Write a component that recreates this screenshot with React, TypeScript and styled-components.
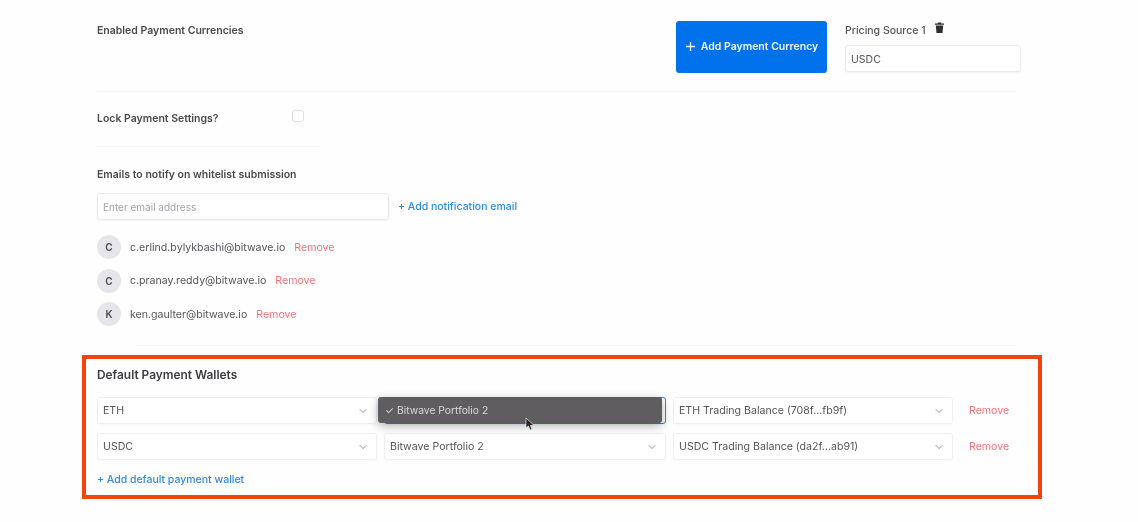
import React from "react";
import styled, { createGlobalStyle } from "styled-components";
import { ChevronDown } from "lucide-react";

const Global = createGlobalStyle`
  html, body { margin: 0; padding: 0; background: #fefefe; }
  body { font-family: Inter, "Liberation Sans", sans-serif; width: 1138px; height: 522px; overflow: hidden; }
`;

const Page = styled.div`
  box-sizing: border-box;
  width: 1138px;
  height: 522px;
  padding: 21px 0 0 97px;
  filter: blur(0.6px);
  display: flex;
  flex-direction: column;
  align-items: flex-start;
  color: #44444a;
`;

const Label = styled.div`
  font-size: 10.5px;
  font-weight: 600;
  line-height: 14px;
  color: #4a4a50;
`;

const CurrencyRow = styled.div`
  display: flex;
  width: 925px;
  height: 52px;
`;

const CurrencyLabel = styled(Label)`
  width: 579px;
  padding-top: 3px;
`;

const AddCurrency = styled.button`
  box-sizing: border-box;
  width: 151px;
  height: 52px;
  margin-right: 18px;
  border: 0;
  border-radius: 3px;
  background: #0272ec;
  color: #eef6ff;
  font: 600 10.5px Inter, sans-serif;
  display: flex;
  align-items: center;
  justify-content: center;
  gap: 5px;
  padding: 0 0 1px;
  white-space: nowrap;
`;

const Pricing = styled.div`
  display: flex;
  flex-direction: column;
  width: 176px;
`;

const PricingHead = styled.div`
  display: flex;
  align-items: flex-start;
  gap: 9px;
  height: 24px;
  padding-top: 3px;
  box-sizing: border-box;
  font-size: 10.5px;
  font-weight: 500;
  line-height: 14px;
  color: #55555b;
`;

const TrashIcon = styled.svg`
  margin-top: -2px;
`;

const PricingInput = styled.div`
  box-sizing: border-box;
  height: 27px;
  width: 176px;
  border: 1px solid #ebebee;
  border-radius: 3px;
  padding: 0 5px;
  font-size: 10.5px;
  line-height: 27px;
  color: #55555b;
  background: #fff;
  box-shadow: 0 1px 2px rgba(0, 0, 0, 0.04);
`;

const Divider = styled.div<{ $w: number; $top: number; $left?: number }>`
  width: ${(p) => p.$w}px;
  height: 1px;
  margin-top: ${(p) => p.$top}px;
  margin-left: ${(p) => p.$left ?? 0}px;
  background: #f5f5f7;
`;

const LockRow = styled.div`
  display: flex;
  align-items: flex-start;
  height: 54px;
  padding-top: 19px;
  box-sizing: border-box;
`;

const LockLabel = styled(Label)`
  width: 195px;
  padding-top: 1px;
`;

const Check = styled.span`
  box-sizing: border-box;
  width: 12px;
  height: 12px;
  margin-top: -1px;
  border: 1px solid #dfdfe3;
  border-radius: 3px;
  background: #fff;
`;

const EmailsTitle = styled(Label)`
  margin-top: 21px;
`;

const EmailRow = styled.div`
  display: flex;
  align-items: center;
  gap: 9px;
  margin-top: 11px;
`;

const EmailInput = styled.div`
  box-sizing: border-box;
  width: 292px;
  height: 27px;
  border: 1px solid #e9e9ed;
  border-radius: 3px;
  padding: 0 5px;
  font-size: 10px;
  line-height: 27px;
  color: #a3a3a9;
  background: #fff;
  box-shadow: 0 1px 2px rgba(0, 0, 0, 0.05);
`;

const BlueLink = styled.span`
  font-size: 10.5px;
  font-weight: 500;
  line-height: 14px;
  color: #2f8be6;
  white-space: nowrap;
`;

const People = styled.div`
  display: flex;
  flex-direction: column;
  gap: 9.5px;
  margin-top: 15px;
`;

const Person = styled.div`
  display: flex;
  align-items: center;
  height: 24px;
  font-size: 10.6px;
  color: #55555b;
`;

const Avatar = styled.span`
  width: 24px;
  height: 24px;
  margin-right: 9px;
  border-radius: 50%;
  background: #e6e6ea;
  color: #4b4b52;
  font-size: 10px;
  font-weight: 600;
  display: flex;
  align-items: center;
  justify-content: center;
`;

const RemoveLink = styled.span`
  margin-left: 9px;
  font-size: 10.6px;
  color: #f3737b;
`;

const Frame = styled.section`
  box-sizing: border-box;
  width: 960px;
  height: 144px;
  margin: 9px 0 0 -15px;
  border: 4px solid #f2440c;
  padding: 9px 11px 0;
`;

const FrameTitle = styled.div`
  font-size: 11.9px;
  font-weight: 600;
  line-height: 14px;
  color: #3c3c42;
`;

const WalletGrid = styled.div`
  display: grid;
  grid-template-columns: 280px 282px 280px 60px;
  column-gap: 7px;
  row-gap: 9px;
  margin-top: 15px;
  margin-right: -20px;
`;

const SelectBox = styled.div<{ $focus?: boolean }>`
  position: relative;
  box-sizing: border-box;
  height: 27px;
  border: 1px solid ${(p) => (p.$focus ? "#3f7fd0" : "#efeff2")};
  border-radius: 3px;
  background: #fff;
  padding: 0 5px;
  display: flex;
  align-items: center;
  justify-content: space-between;
  font-size: 10.6px;
  color: #55555b;
  white-space: nowrap;
  box-shadow: 0 1px 2px rgba(0, 0, 0, 0.03);
  & > svg { color: #77777d; margin-right: 2px; }
`;

const Menu = styled.div`
  position: absolute;
  left: -7px;
  top: -1px;
  width: 284px;
  height: 26px;
  box-sizing: border-box;
  border-radius: 3px;
  background: #5f5d60;
  color: #d8d8da;
  font-size: 10.3px;
  line-height: 26px;
  padding-left: 7px;
  box-shadow: 0 3px 10px rgba(0, 0, 0, 0.3);
  z-index: 2;
`;

const Cursor = styled.svg`
  position: absolute;
  left: 140px;
  top: 19px;
  z-index: 3;
`;

const RowRemove = styled.span`
  font-size: 10.6px;
  color: #f3737b;
  line-height: 27px;
  padding-left: 9px;
`;

const AddWallet = styled(BlueLink)`
  display: block;
  margin-top: 13px;
`;

const Plus = () => (
  <svg width="11" height="11" viewBox="0 0 11 11" aria-hidden="true">
    <path d="M5.5 1v9M1 5.5h9" stroke="#eef6ff" strokeWidth="1.3" />
  </svg>
);

const Trash = () => (
  <TrashIcon width="9" height="11" viewBox="0 0 9 11" aria-hidden="true">
    <path d="M3 0.5h3l.5 1H9v1.2H0V1.500h2.500zM.8 3.500h7.400L7.500 11h-6z" fill="#2f2f33" />
  </TrashIcon>
);

const Chevron = () => <ChevronDown size={12} strokeWidth={1.6} />;

const emails: [string, string][] = [
  ["C", "c.erlind.bylykbashi@bitwave.io"],
  ["C", "c.pranay.reddy@bitwave.io"],
  ["K", "ken.gaulter@bitwave.io"],
];

export default function App() {
  return (
    <>
      <Global />
      <Page>
        <CurrencyRow>
          <CurrencyLabel>Enabled Payment Currencies</CurrencyLabel>
          <AddCurrency>
            <Plus />
            Add Payment Currency
          </AddCurrency>
          <Pricing>
            <PricingHead>
              Pricing Source 1
              <Trash />
            </PricingHead>
            <PricingInput>USDC</PricingInput>
          </Pricing>
        </CurrencyRow>
        <Divider $w={920} $top={18} />
        <LockRow>
          <LockLabel>Lock Payment Settings?</LockLabel>
          <Check />
        </LockRow>
        <Divider $w={223} $top={0} />
        <EmailsTitle>Emails to notify on whitelist submission</EmailsTitle>
        <EmailRow>
          <EmailInput>Enter email address</EmailInput>
          <BlueLink>+ Add notification email</BlueLink>
        </EmailRow>
        <People>
          {emails.map(([initial, email]) => (
            <Person key={email}>
              <Avatar>{initial}</Avatar>
              {email}
              <RemoveLink>Remove</RemoveLink>
            </Person>
          ))}
        </People>
        <Divider $w={880} $top={19} $left={40} />
        <Frame>
          <FrameTitle>Default Payment Wallets</FrameTitle>
          <WalletGrid>
            <SelectBox>
              ETH
              <Chevron />
            </SelectBox>
            <SelectBox $focus>
              <Menu>✓ Bitwave Portfolio 2</Menu>
              <Cursor width="10" height="14" viewBox="0 0 10 14" aria-hidden="true">
                <path d="M1 1l0 10 2.500-2 1.500 4 2-.8-1.600-3.800H9z" fill="#26262a" stroke="#fff" strokeWidth="0.6" />
              </Cursor>
            </SelectBox>
            <SelectBox>
              ETH Trading Balance (708f...fb9f)
              <Chevron />
            </SelectBox>
            <RowRemove>Remove</RowRemove>
            <SelectBox>
              USDC
              <Chevron />
            </SelectBox>
            <SelectBox>
              Bitwave Portfolio 2
              <Chevron />
            </SelectBox>
            <SelectBox>
              USDC Trading Balance (da2f...ab91)
              <Chevron />
            </SelectBox>
            <RowRemove>Remove</RowRemove>
          </WalletGrid>
          <AddWallet>+ Add default payment wallet</AddWallet>
        </Frame>
      </Page>
    </>
  );
}
